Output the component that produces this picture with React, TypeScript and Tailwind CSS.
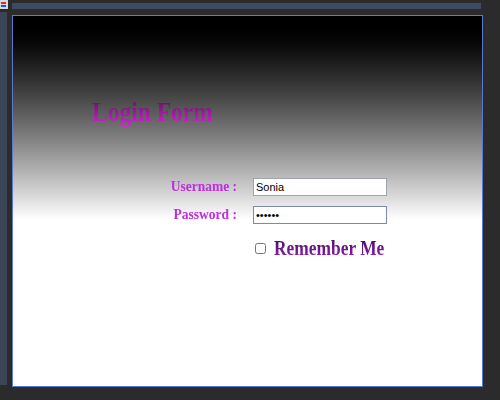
export default function App() {
  return (
    <div className="w-[500px] h-[400px] bg-[#2b2b2b] flex flex-col overflow-hidden">
      {/* top chrome */}
      <div className="flex h-[12px]">
        <div className="w-[8px] h-[9px] bg-[#d8d8e0] flex flex-col justify-center pl-[1px] gap-[1px]">
          <div className="w-[5px] h-[2px] bg-[#d03030]" />
          <div className="w-[5px] h-[2px] bg-[#3050c0]" />
        </div>
        <div className="ml-[4px] mt-[3px] w-[469px] h-[6px] bg-[#3e4a5f]" />
      </div>
      <div className="flex">
        <div className="w-[7px] h-[373px] bg-[#3a4556]" />
        <div
          className="ml-[5px] mt-[3px] w-[471px] h-[372px] border border-[#5a7ad0] bg-gradient-to-b from-black to-white to-[55%] flex flex-col"
          style={{ fontFamily: '"Liberation Serif", "Times New Roman", serif' }}
        >
          <h1 className="ml-[79px] mt-[81px] text-[28px] leading-[30px] font-bold bg-gradient-to-b from-[#5a0f5a] to-[#e020e0] bg-clip-text text-transparent w-fit origin-left scale-x-[0.84]">
            Login Form
          </h1>
          <div className="mt-[50px] grid grid-cols-[224px_134px] gap-x-[16px] gap-y-[9px] items-center">
            <label className="text-right text-[15px] leading-[19px] font-bold text-[#c02de0] origin-right scale-x-[0.9]">
              Username :
            </label>
            <input
              defaultValue="Sonia"
              className="h-[18px] border border-[#a0a4ac] bg-white px-[2px] text-[11px] text-black outline-none"
              style={{ fontFamily: '"Liberation Sans", Arial, sans-serif' }}
            />
            <label className="text-right text-[15px] leading-[19px] font-bold text-[#c02de0] origin-right scale-x-[0.9]">
              Password :
            </label>
            <input
              type="password"
              defaultValue="sonias"
              className="h-[18px] border border-[#7a8aa8] bg-white px-[2px] text-[11px] text-black outline-none"
              style={{ fontFamily: '"Liberation Sans", Arial, sans-serif' }}
            />
          </div>
          <div className="mt-[12px] ml-[242px] flex items-center gap-[8px]">
            <input type="checkbox" className="w-[11px] h-[11px] m-0" />
            <span className="text-[20px] leading-[24px] font-bold bg-gradient-to-b from-[#3c0a5a] to-[#9a22b8] bg-clip-text text-transparent origin-left scale-x-[0.87]">
              Remember Me
            </span>
          </div>
        </div>
      </div>
    </div>
  );
}
